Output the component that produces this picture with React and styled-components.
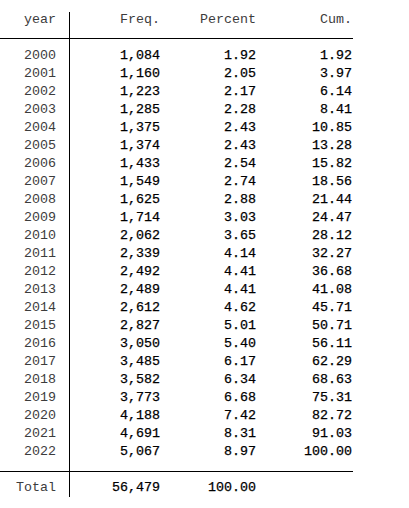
import React from "react";
import styled, { createGlobalStyle } from "styled-components";

const Global = createGlobalStyle`
  html, body { margin: 0; padding: 0; background: #ffffff; }
  body { font-family: "Liberation Mono", "Courier New", monospace; }
`;

const rows = [
  ["2000", "1,084", "1.92", "1.92"],
  ["2001", "1,160", "2.05", "3.97"],
  ["2002", "1,223", "2.17", "6.14"],
  ["2003", "1,285", "2.28", "8.41"],
  ["2004", "1,375", "2.43", "10.85"],
  ["2005", "1,374", "2.43", "13.28"],
  ["2006", "1,433", "2.54", "15.82"],
  ["2007", "1,549", "2.74", "18.56"],
  ["2008", "1,625", "2.88", "21.44"],
  ["2009", "1,714", "3.03", "24.47"],
  ["2010", "2,062", "3.65", "28.12"],
  ["2011", "2,339", "4.14", "32.27"],
  ["2012", "2,492", "4.41", "36.68"],
  ["2013", "2,489", "4.41", "41.08"],
  ["2014", "2,612", "4.62", "45.71"],
  ["2015", "2,827", "5.01", "50.71"],
  ["2016", "3,050", "5.40", "56.11"],
  ["2017", "3,485", "6.17", "62.29"],
  ["2018", "3,582", "6.34", "68.63"],
  ["2019", "3,773", "6.68", "75.31"],
  ["2020", "4,188", "7.42", "82.72"],
  ["2021", "4,691", "8.31", "91.03"],
  ["2022", "5,067", "8.97", "100.00"],
];

const Table = styled.div`
  padding-top: 12px;
  width: 353px;
  font-size: 13.33px;
`;

const Section = styled.div`
  display: flex;
  border-bottom: ${(p) => (p.$rule ? "1px solid #000" : "none")};
`;

const Column = styled.div`
  display: flex;
  flex-direction: column;
  align-items: flex-end;
  box-sizing: border-box;
  width: ${(p) => p.$w}px;
  padding-top: ${(p) => p.$pt}px;
  padding-bottom: ${(p) => p.$pb}px;
  padding-right: ${(p) => p.$pr || 0}px;
  border-right: ${(p) => (p.$divider ? "1px solid #000" : "none")};
`;

const Cell = styled.div`
  height: ${(p) => p.$h}px;
  line-height: ${(p) => p.$h}px;
  white-space: pre;
  color: ${(p) => (p.$num ? "#000" : "#3c3c3c")};
  -webkit-text-stroke: ${(p) => (p.$num ? "0.25px #000" : "0")};
`;

const cols = [
  { w: 70, pr: 13, divider: true },
  { w: 90 },
  { w: 96 },
  { w: 97, pr: 1 },
];

function Block({ data, pt, pb, h, rule, header }) {
  return (
    <Section $rule={rule}>
      {cols.map((c, ci) => (
        <Column key={ci} $w={c.w} $pr={c.pr} $divider={c.divider} $pt={pt} $pb={pb}>
          {data.map((r, ri) => (
            <Cell key={ri} $h={h} $num={!header && ci > 0}>
              {r[ci]}
            </Cell>
          ))}
        </Column>
      ))}
    </Section>
  );
}

export default function App() {
  return (
    <>
      <Global />
      <Table>
        <Block data={[["year", "Freq.", "Percent", "Cum."]]} pt={0} pb={10} h={16} rule header />
        <Block data={rows} pt={8} pb={10} h={18} rule />
        <Block data={[["Total", "56,479", "100.00", ""]]} pt={7} pb={0} h={18} />
      </Table>
    </>
  );
}
